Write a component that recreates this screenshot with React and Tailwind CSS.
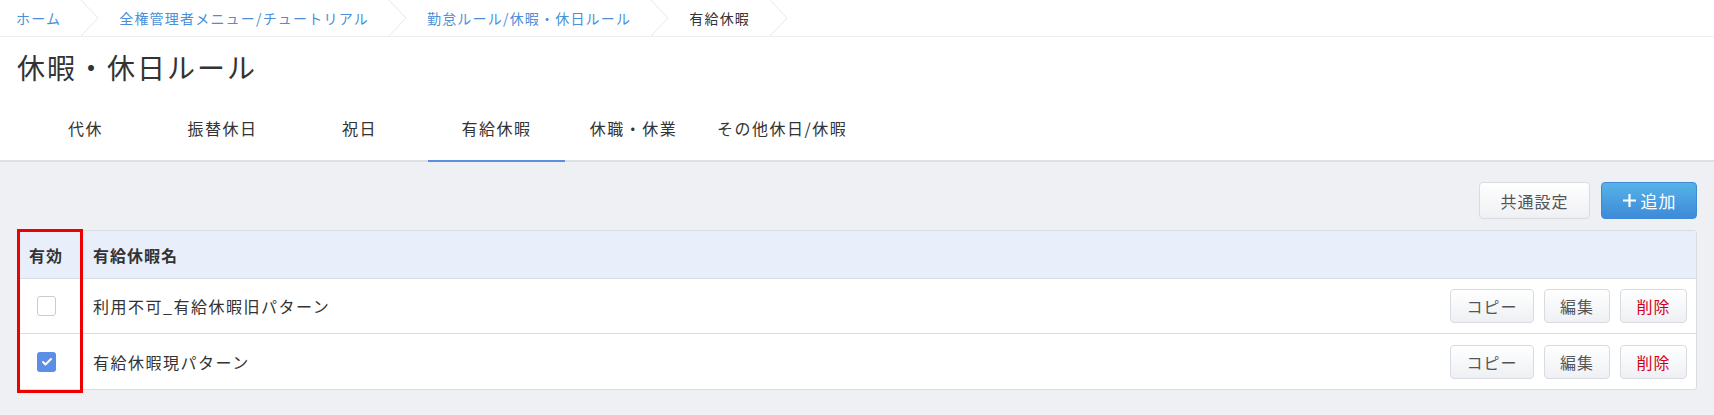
import { Check } from 'lucide-react'

const crumbs = ['ホーム', '全権管理者メニュー/チュートリアル', '勤怠ルール/休暇・休日ルール', '有給休暇']
const tabs = ['代休', '振替休日', '祝日', '有給休暇', '休職・休業', 'その他休日/休暇']
const rows = [
  { name: '利用不可_有給休暇旧パターン', enabled: false },
  { name: '有給休暇現パターン', enabled: true },
]

function Chevron() {
  return (
    <svg width="18" height="36" viewBox="0 0 18 36" className="shrink-0">
      <polyline points="0,0 17,18 0,36" fill="none" stroke="#e6e8ec" strokeWidth="1" />
    </svg>
  )
}

function Btn({ children, danger, className = '' }) {
  return (
    <button
      className={`h-[34px] rounded-[4px] border border-[#d8dbe0] bg-gradient-to-b from-white to-[#eff0f3] text-[16px] tracking-[1px] ${danger ? 'text-[#d0021b]' : 'text-[#555]'} ${className}`}
    >
      {children}
    </button>
  )
}

export default function App() {
  return (
    <div className="w-[1714px] h-[415px] bg-[#eef0f4] font-['Noto_Sans_CJK_JP','Noto_Sans',sans-serif] text-[#333] overflow-hidden">
      {/* パンくず */}
      <div className="h-[37px] bg-white border-b border-[#eceef2] flex items-center text-[14px] tracking-[1.2px]">
        {crumbs.map((c, i) => (
          <div key={c} className="flex items-center">
            <span className={`${i === 0 ? 'pl-4' : 'pl-5'} pr-5 ${i === crumbs.length - 1 ? 'text-[#333]' : 'text-[#4a8fd8]'}`}>{c}</span>
            <Chevron />
          </div>
        ))}
      </div>

      {/* タイトル + タブ */}
      <div className="bg-white border-b-2 border-[#dcdfe4]">
        <h1 className="pl-[17px] pt-[10px] h-[66px] text-[28px] tracking-[2px] leading-[40px] font-normal">休暇・休日ルール</h1>
        <div className="flex pl-[17px]">
          {tabs.map((t, i) => (
            <div
              key={t}
              className={`min-w-[137px] px-[15px] h-[59px] pt-[13px] flex justify-center text-[16px] leading-[24px] tracking-[1.5px] -mb-[2px] border-b-2 ${i === 3 ? 'border-[#5a8fe0]' : 'border-transparent'}`}
            >
              {t}
            </div>
          ))}
        </div>
      </div>

      {/* 本体 */}
      <div className="px-[17px] pt-[20px]">
        <div className="flex justify-end gap-[11px]">
          <button className="w-[111px] h-[37px] rounded-[4px] border border-[#d8dbe0] bg-gradient-to-b from-white to-[#eff0f3] text-[16px] tracking-[1px] text-[#555]">
            共通設定
          </button>
          <button className="w-[96px] h-[37px] rounded-[4px] border border-[#3f8ad6] bg-gradient-to-b from-[#56b3e7] to-[#3e8ad8] text-white text-[17px] tracking-[1px] flex items-center justify-center gap-[4px]">
            <svg width="15" height="15" viewBox="0 0 15 15">
              <path d="M7.5 1v13M1 7.5h13" stroke="white" strokeWidth="2.2" />
            </svg>
            追加
          </button>
        </div>

        <div className="relative mt-[11px] bg-white border border-[#d9dce2] rounded-[3px]">
          <div className="flex h-[48px] bg-[#e8effb] border-b border-[#d9dce2] font-bold text-[16px] tracking-[1px]">
            <div className="w-[65px] pl-[11px] flex items-center border-r border-[#d9dce2]">有効</div>
            <div className="pl-[10px] flex items-center">有給休暇名</div>
          </div>
          {rows.map((r, i) => (
            <div key={r.name} className={`flex h-[55px] ${i === 0 ? 'border-b border-[#d9dce2]' : ''}`}>
              <div className="w-[65px] pl-[19px] flex items-center border-r border-[#d9dce2]">
                {r.enabled ? (
                  <span className="w-[19px] h-[20px] rounded-[3px] bg-[#5b8ee6] flex items-center justify-center">
                    <Check size={12} color="white" strokeWidth={4} />
                  </span>
                ) : (
                  <span className="w-[19px] h-[20px] rounded-[3px] border border-[#c9ccd1] bg-white" />
                )}
              </div>
              <div className="flex-1 pl-[10px] flex items-center text-[16px] tracking-[1.5px]">{r.name}</div>
              <div className="flex items-center gap-[10px] pr-[9px]">
                <Btn className="w-[84px]">コピー</Btn>
                <Btn className="w-[66px]">編集</Btn>
                <Btn danger className="w-[67px]">削除</Btn>
              </div>
            </div>
          ))}
          {/* 赤枠 */}
          <div className="absolute -left-[1px] -top-[2px] w-[66px] h-[164px] border-[3px] border-[#ee0000] pointer-events-none" />
        </div>
      </div>
    </div>
  )
}
